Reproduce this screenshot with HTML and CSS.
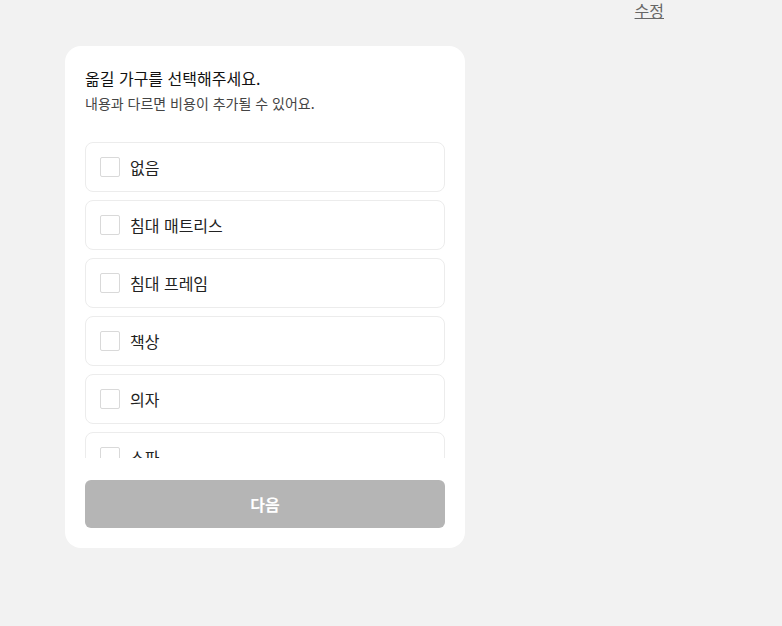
FILE: index.html
```html
<!DOCTYPE html>
<html lang="ko">
<head>
<meta charset="utf-8">
<link rel="stylesheet" href="styles.css">
</head>
<body>
<div class="wrap">
  <div class="top"><a class="edit" href="#">수정</a></div>
  <div class="card">
    <div class="head">
      <div class="title">옮길 가구를 선택해주세요.</div>
      <div class="sub">내용과 다르면 비용이 추가될 수 있어요.</div>
    </div>
    <div class="list">
      <label class="item"><span class="box"></span><span class="txt">없음</span></label>
      <label class="item"><span class="box"></span><span class="txt">침대 매트리스</span></label>
      <label class="item"><span class="box"></span><span class="txt">침대 프레임</span></label>
      <label class="item"><span class="box"></span><span class="txt">책상</span></label>
      <label class="item"><span class="box"></span><span class="txt">의자</span></label>
      <label class="item"><span class="box"></span><span class="txt">소파</span></label>
      <label class="item"><span class="box"></span><span class="txt">옷장</span></label>
    </div>
    <button class="next">다음</button>
  </div>
</div>
</body>
</html>
```
FILE: styles.css
```css
* { box-sizing: border-box; }
html, body { margin: 0; padding: 0; }
body {
  background: #f2f2f2;
  font-family: "Noto Sans CJK KR", "Noto Sans", sans-serif;
  color: #222;
  width: 782px;
  height: 626px;
  overflow: hidden;
}
.wrap {
  margin-left: 65px;
  width: 600px;
}
.top {
  display: flex;
  justify-content: flex-end;
  height: 46px;
  padding-right: 1px;
}
.edit {
  font-size: 16px;
  line-height: 20px;
  color: #666;
  text-decoration: underline;
}
.card {
  width: 400px;
  background: #fff;
  border-radius: 16px;
  padding: 20px 20px 20px;
}
.head { height: 48px; }
.title {
  font-size: 16px;
  line-height: 24px;
  font-weight: 400;
  color: #111;
}
.sub {
  margin-top: 3px;
  font-size: 14px;
  line-height: 20px;
  color: #444;
}
.list {
  margin-top: 28px;
  height: 316px;
  overflow: hidden;
  display: flex;
  flex-direction: column;
  gap: 8px;
}
.item {
  flex: 0 0 50px;
  display: flex;
  align-items: center;
  gap: 10px;
  padding-left: 14px;
  border: 1px solid #ececec;
  border-radius: 8px;
  font-size: 16px;
  color: #222;
}
.box {
  width: 20px;
  height: 20px;
  border: 1px solid #d9d9d9;
  border-radius: 2px;
}
.next {
  display: block;
  margin-top: 22px;
  width: 360px;
  height: 48px;
  border: 0;
  border-radius: 6px;
  background: #b5b5b5;
  color: #fff;
  font-family: inherit;
  font-size: 16px;
  font-weight: 700;
}
```
